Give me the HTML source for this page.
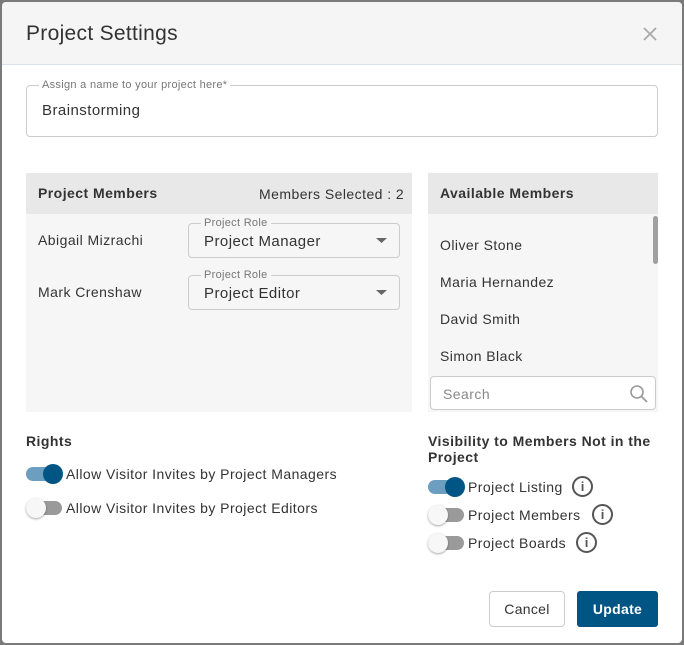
<!DOCTYPE html>
<html><head><meta charset="utf-8"><style>
*{box-sizing:border-box;margin:0;padding:0}
body{width:684px;height:645px;background:#7a7a7a;font-family:"Liberation Sans",sans-serif;color:#333;position:relative;overflow:hidden}
.dlg{position:absolute;left:2px;top:2px;width:680px;height:641px;background:#fff;border-radius:4px;overflow:hidden}
.a{position:absolute}
.hdr{left:0;top:0;width:680px;height:63px;background:#f5f5f5;border-bottom:1px solid #dde3ea}
.t{white-space:nowrap;letter-spacing:.45px}
.fs{border:1px solid #ccc;border-radius:4px}
.lg{position:absolute;top:-7px;background:#fff;padding:0 3px;font-size:11px;color:#777;line-height:12px;letter-spacing:.3px}
.tog{position:absolute;width:38px;height:22px}
.tr{position:absolute;left:0;top:4px;width:36px;height:14px;border-radius:7px}
.kn{position:absolute;top:1px;width:20px;height:20px;border-radius:50%}
.on .tr{background:#6b9ebf}.on .kn{left:17px;background:#005584}
.off .tr{background:#9a9a9a}.off .kn{left:0;background:#f7f7f7;box-shadow:0 1px 2px rgba(0,0,0,.35)}
.info{position:absolute;width:21px;height:21px;border:2px solid #555;border-radius:50%;font-size:13px;font-weight:bold;text-align:center;line-height:17px;color:#555}
</style></head><body>
<div class="dlg">
<div class="a hdr"></div>
<div class="a t" style="left:24px;top:20px;font-size:21px;color:#333;letter-spacing:.3px">Project Settings</div>
<svg class="a" style="left:640px;top:24px" width="16" height="16"><path d="M2 2L14 14M14 2L2 14" stroke="#aaa" stroke-width="1.8"/></svg>

<div class="a fs" style="left:24px;top:83px;width:632px;height:52px"><span class="lg" style="left:12px">Assign a name to your project here*</span></div>
<div class="a t" style="left:40px;top:100px;font-size:15px">Brainstorming</div>

<div class="a" style="left:24px;top:171px;width:386px;height:239px;background:#f6f6f6"></div>
<div class="a" style="left:24px;top:171px;width:386px;height:41px;background:#e8e8e8"></div>
<div class="a t" style="left:36px;top:183px;font-size:14px;font-weight:bold">Project Members</div>
<div class="a t" style="left:257px;top:184px;font-size:14px">Members Selected : 2</div>
<div class="a t" style="left:36px;top:230px;font-size:14px">Abigail Mizrachi</div>
<div class="a t" style="left:36px;top:282px;font-size:14px">Mark Crenshaw</div>
<div class="a fs" style="left:186px;top:221px;width:212px;height:35px;background:transparent"><span class="lg" style="left:12px;background:#f6f6f6">Project Role</span></div>
<div class="a t" style="left:202px;top:231px;font-size:15px">Project Manager</div>
<div class="a fs" style="left:186px;top:273px;width:212px;height:35px;background:transparent"><span class="lg" style="left:12px;background:#f6f6f6">Project Role</span></div>
<div class="a t" style="left:202px;top:283px;font-size:15px">Project Editor</div>
<svg class="a" style="left:374px;top:235px" width="12" height="8"><path d="M0 1L11 1L5.5 6Z" fill="#666"/></svg>
<svg class="a" style="left:374px;top:287px" width="12" height="8"><path d="M0 1L11 1L5.5 6Z" fill="#666"/></svg>

<div class="a" style="left:426px;top:171px;width:230px;height:239px;background:#f6f6f6"></div>
<div class="a" style="left:426px;top:171px;width:230px;height:41px;background:#e8e8e8"></div>
<div class="a t" style="left:438px;top:183px;font-size:14px;font-weight:bold">Available Members</div>
<div class="a" style="left:651px;top:214px;width:5px;height:48px;background:#a0a0a0;border-radius:3px"></div>
<div class="a t" style="left:438px;top:235px;font-size:14px">Oliver Stone</div>
<div class="a t" style="left:438px;top:272px;font-size:14px">Maria Hernandez</div>
<div class="a t" style="left:438px;top:309px;font-size:14px">David Smith</div>
<div class="a t" style="left:438px;top:346px;font-size:14px">Simon Black</div>
<div class="a fs" style="left:428px;top:374px;width:226px;height:34px;background:#fff"></div>
<div class="a t" style="left:441px;top:384px;font-size:14px;color:#888">Search</div>
<svg class="a" style="left:627px;top:382px" width="20" height="20"><circle cx="8" cy="8" r="6" fill="none" stroke="#999" stroke-width="1.6"/><path d="M12.5 12.5L18 18" stroke="#999" stroke-width="1.8"/></svg>

<div class="a t" style="left:24px;top:431px;font-size:14px;font-weight:bold">Rights</div>
<div class="tog on" style="left:24px;top:461px"><div class="tr"></div><div class="kn"></div></div>
<div class="a t" style="left:64px;top:464px;font-size:14px">Allow Visitor Invites by Project Managers</div>
<div class="tog off" style="left:24px;top:495px"><div class="tr"></div><div class="kn"></div></div>
<div class="a t" style="left:64px;top:498px;font-size:14px">Allow Visitor Invites by Project Editors</div>

<div class="a" style="left:426px;top:431px;font-size:14px;font-weight:bold;width:240px;line-height:16px;letter-spacing:.45px">Visibility to Members Not in the Project</div>
<div class="tog on" style="left:426px;top:474px"><div class="tr"></div><div class="kn"></div></div>
<div class="a t" style="left:466px;top:477px;font-size:14px">Project Listing</div>
<div class="info" style="left:570px;top:474px">i</div>
<div class="tog off" style="left:426px;top:502px"><div class="tr"></div><div class="kn"></div></div>
<div class="a t" style="left:466px;top:505px;font-size:14px">Project Members</div>
<div class="info" style="left:590px;top:502px">i</div>
<div class="tog off" style="left:426px;top:530px"><div class="tr"></div><div class="kn"></div></div>
<div class="a t" style="left:466px;top:533px;font-size:14px">Project Boards</div>
<div class="info" style="left:574px;top:530px">i</div>

<div class="a fs" style="left:487px;top:589px;width:76px;height:36px;text-align:center;line-height:34px;font-size:14px;letter-spacing:.3px">Cancel</div>
<div class="a" style="left:575px;top:589px;width:81px;height:36px;background:#005584;border-radius:3px;color:#fff;text-align:center;line-height:36px;font-size:14px;font-weight:bold;letter-spacing:.3px">Update</div>
</div>
</body></html>
